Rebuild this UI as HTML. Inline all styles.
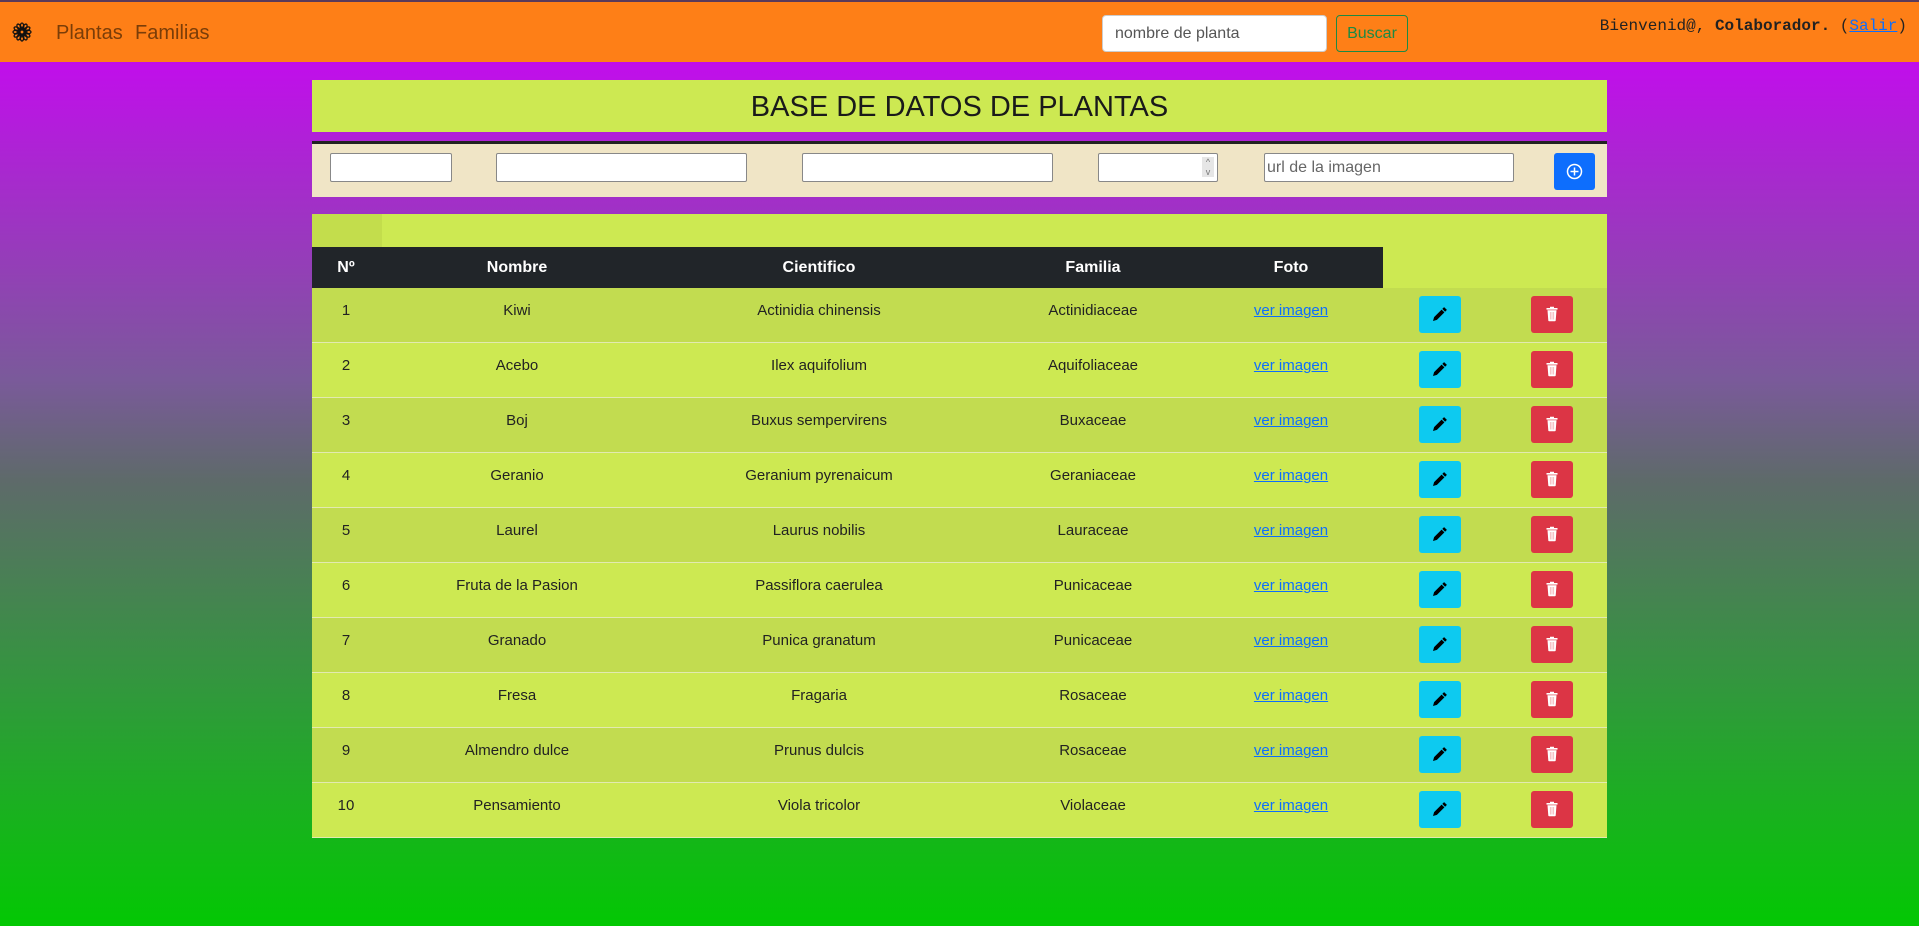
<!DOCTYPE html>
<html><head><meta charset="utf-8">
<style>
*{box-sizing:border-box;margin:0;padding:0}
html,body{width:1919px;height:926px;overflow:hidden}
body{font-family:"Liberation Sans",sans-serif;background:linear-gradient(180deg,#c10eeb 62px,#7a5a9a 380px,#5e6a6a 480px,#2f9a3a 700px,#03c803 926px);position:relative}
.nav{position:absolute;left:0;top:0;width:1919px;height:62px;background:#fe7f17;border-top:2px solid #5a3a5a}
.nav .logo{position:absolute;left:12px;top:20px}
.nav .l{position:absolute;top:20px;font-size:20px;color:#7a3d08}
.search{position:absolute;left:1102px;top:13px;width:225px;height:37px;background:#fff;border:1px solid #ccc;border-radius:4px;font-size:16px;color:#555;padding:9px 12px}
.buscar{position:absolute;left:1336px;top:13px;width:72px;height:37px;border:1px solid #1c8a44;border-radius:4px;color:#1c8a44;font-size:16px;text-align:center;line-height:35px}
.bien{position:absolute;right:12px;top:15px;font-family:"Liberation Mono",monospace;font-size:16px;color:#222}
.bien a{color:#0d6efd;text-decoration:underline}
.title{position:absolute;left:312px;top:80px;width:1295px;height:52px;background:#cde952;text-align:center;font-size:29px;line-height:54px;color:#1a1a1a}
.form{position:absolute;left:312px;top:141px;width:1295px;height:56px;background:#f0e5c6;border-top:3px solid #222}
.form .i{position:absolute;top:9px;height:29px;background:#fff;border:1px solid #888;border-radius:2px;font-size:16px;color:#666;padding:5px 2px}
.plus{position:absolute;left:1242px;top:9px;width:41px;height:37px;background:#0d6efd;border-radius:3px}
.tbl{position:absolute;left:312px;top:214px;width:1295px;height:624px;background:#cde952}
.tbl .corner{position:absolute;left:0;top:0;width:70px;height:33px;background:#c3dd4c}
.thead{position:absolute;left:0;top:33px;width:1071px;height:41px;background:#212529;color:#fff;font-weight:bold;font-size:16px}
.c{position:absolute;transform:translateX(-50%);white-space:nowrap}
.row{position:absolute;left:0;width:1295px;height:55px;border-bottom:1px solid #e2eab0;font-size:15px;color:#222}
.row .c{top:14px}
.row a{color:#0d6efd;text-decoration:underline;font-size:15px}
.ed,.dl{position:absolute;top:8px;width:42px;height:37px;border-radius:3px}
.ed{left:1107px;background:#0dcaf0}
.dl{left:1219px;background:#dc3545}
.ed svg,.dl svg{position:absolute;left:13px;top:10px}
</style></head><body>
<div class="nav">
<svg class="logo" width="20" height="20" viewBox="0 0 20 20"><g fill="none" stroke="#111" stroke-width="1.3"><circle cx="10" cy="10" r="2.5"/><g id="p"><ellipse cx="10" cy="4.5" rx="1.8" ry="3.5"/></g><use href="#p" transform="rotate(30 10 10)"/><use href="#p" transform="rotate(60 10 10)"/><use href="#p" transform="rotate(90 10 10)"/><use href="#p" transform="rotate(120 10 10)"/><use href="#p" transform="rotate(150 10 10)"/><use href="#p" transform="rotate(180 10 10)"/><use href="#p" transform="rotate(210 10 10)"/><use href="#p" transform="rotate(240 10 10)"/><use href="#p" transform="rotate(270 10 10)"/><use href="#p" transform="rotate(300 10 10)"/><use href="#p" transform="rotate(330 10 10)"/></g></svg>
<span class="l" style="left:56px">Plantas</span><span class="l" style="left:135px">Familias</span>
<div class="search">nombre de planta</div>
<div class="buscar">Buscar</div>
<div class="bien">Bienvenid@, <b>Colaborador.</b> (<a>Salir</a>)</div>
</div>
<div class="title">BASE DE DATOS DE PLANTAS</div>
<div class="form">
<div class="i" style="left:18px;width:122px"></div>
<div class="i" style="left:184px;width:251px"></div>
<div class="i" style="left:490px;width:251px"></div>
<div class="i" style="left:786px;width:120px"><span style="position:absolute;right:3px;top:3px;width:12px;height:20px;background:#e6e6e6;font-size:9px;line-height:10px;text-align:center;color:#777">^<br>v</span></div>
<div class="i" style="left:952px;width:250px">url de la imagen</div>
<div class="plus"><svg width="41" height="37" viewBox="0 0 41 37"><circle cx="20.5" cy="18.5" r="7" fill="none" stroke="#fff" stroke-width="1.5"/><path d="M20.5 14.5v8M16.5 18.5h8" stroke="#fff" stroke-width="1.5"/></svg></div>
</div>
<div class="tbl">
<div class="corner"></div>
<div class="thead">
<span class="c" style="left:34px;top:12px">Nº</span>
<span class="c" style="left:205px;top:12px">Nombre</span>
<span class="c" style="left:507px;top:12px">Cientifico</span>
<span class="c" style="left:781px;top:12px">Familia</span>
<span class="c" style="left:979px;top:12px">Foto</span>
</div>
</div>
<svg width="0" height="0" style="position:absolute">
<defs>
<symbol id="pen" viewBox="0 0 16 16"><path d="M12.1 1.1l2.8 2.8-1.8 1.8-2.8-2.8zM9.6 3.6l2.8 2.8-7.5 7.5-3.9 1.1 1.1-3.9z" fill="#000"/></symbol>
<symbol id="trash" viewBox="0 0 16 16"><path d="M2.5 2h11v1.6h-11zM6 .8h4v1.4H6zM3.5 4.2h9l-.8 10.3c0 .4-.4.7-.8.7H5.1c-.4 0-.8-.3-.8-.7z" fill="#fff"/><path d="M6.3 6v7.5M8 6v7.5M9.7 6v7.5" stroke="#f1a0a8" stroke-width=".7"/></symbol>
</defs></svg>
<div style="position:absolute;left:312px;top:288px;width:1295px">
<div class="row" style="top:0;background:#c2dc50"><span class="c" style="left:34px">1</span><span class="c" style="left:205px">Kiwi</span><span class="c" style="left:507px">Actinidia chinensis</span><span class="c" style="left:781px">Actinidiaceae</span><span class="c" style="left:979px"><a>ver imagen</a></span><div class="ed"><svg width="16" height="16"><use href="#pen"/></svg></div><div class="dl"><svg width="16" height="16"><use href="#trash"/></svg></div></div>
<div class="row" style="top:55px;background:#cde952"><span class="c" style="left:34px">2</span><span class="c" style="left:205px">Acebo</span><span class="c" style="left:507px">Ilex aquifolium</span><span class="c" style="left:781px">Aquifoliaceae</span><span class="c" style="left:979px"><a>ver imagen</a></span><div class="ed"><svg width="16" height="16"><use href="#pen"/></svg></div><div class="dl"><svg width="16" height="16"><use href="#trash"/></svg></div></div>
<div class="row" style="top:110px;background:#c2dc50"><span class="c" style="left:34px">3</span><span class="c" style="left:205px">Boj</span><span class="c" style="left:507px">Buxus sempervirens</span><span class="c" style="left:781px">Buxaceae</span><span class="c" style="left:979px"><a>ver imagen</a></span><div class="ed"><svg width="16" height="16"><use href="#pen"/></svg></div><div class="dl"><svg width="16" height="16"><use href="#trash"/></svg></div></div>
<div class="row" style="top:165px;background:#cde952"><span class="c" style="left:34px">4</span><span class="c" style="left:205px">Geranio</span><span class="c" style="left:507px">Geranium pyrenaicum</span><span class="c" style="left:781px">Geraniaceae</span><span class="c" style="left:979px"><a>ver imagen</a></span><div class="ed"><svg width="16" height="16"><use href="#pen"/></svg></div><div class="dl"><svg width="16" height="16"><use href="#trash"/></svg></div></div>
<div class="row" style="top:220px;background:#c2dc50"><span class="c" style="left:34px">5</span><span class="c" style="left:205px">Laurel</span><span class="c" style="left:507px">Laurus nobilis</span><span class="c" style="left:781px">Lauraceae</span><span class="c" style="left:979px"><a>ver imagen</a></span><div class="ed"><svg width="16" height="16"><use href="#pen"/></svg></div><div class="dl"><svg width="16" height="16"><use href="#trash"/></svg></div></div>
<div class="row" style="top:275px;background:#cde952"><span class="c" style="left:34px">6</span><span class="c" style="left:205px">Fruta de la Pasion</span><span class="c" style="left:507px">Passiflora caerulea</span><span class="c" style="left:781px">Punicaceae</span><span class="c" style="left:979px"><a>ver imagen</a></span><div class="ed"><svg width="16" height="16"><use href="#pen"/></svg></div><div class="dl"><svg width="16" height="16"><use href="#trash"/></svg></div></div>
<div class="row" style="top:330px;background:#c2dc50"><span class="c" style="left:34px">7</span><span class="c" style="left:205px">Granado</span><span class="c" style="left:507px">Punica granatum</span><span class="c" style="left:781px">Punicaceae</span><span class="c" style="left:979px"><a>ver imagen</a></span><div class="ed"><svg width="16" height="16"><use href="#pen"/></svg></div><div class="dl"><svg width="16" height="16"><use href="#trash"/></svg></div></div>
<div class="row" style="top:385px;background:#cde952"><span class="c" style="left:34px">8</span><span class="c" style="left:205px">Fresa</span><span class="c" style="left:507px">Fragaria</span><span class="c" style="left:781px">Rosaceae</span><span class="c" style="left:979px"><a>ver imagen</a></span><div class="ed"><svg width="16" height="16"><use href="#pen"/></svg></div><div class="dl"><svg width="16" height="16"><use href="#trash"/></svg></div></div>
<div class="row" style="top:440px;background:#c2dc50"><span class="c" style="left:34px">9</span><span class="c" style="left:205px">Almendro dulce</span><span class="c" style="left:507px">Prunus dulcis</span><span class="c" style="left:781px">Rosaceae</span><span class="c" style="left:979px"><a>ver imagen</a></span><div class="ed"><svg width="16" height="16"><use href="#pen"/></svg></div><div class="dl"><svg width="16" height="16"><use href="#trash"/></svg></div></div>
<div class="row" style="top:495px;background:#cde952"><span class="c" style="left:34px">10</span><span class="c" style="left:205px">Pensamiento</span><span class="c" style="left:507px">Viola tricolor</span><span class="c" style="left:781px">Violaceae</span><span class="c" style="left:979px"><a>ver imagen</a></span><div class="ed"><svg width="16" height="16"><use href="#pen"/></svg></div><div class="dl"><svg width="16" height="16"><use href="#trash"/></svg></div></div>
</div>
</body></html>
